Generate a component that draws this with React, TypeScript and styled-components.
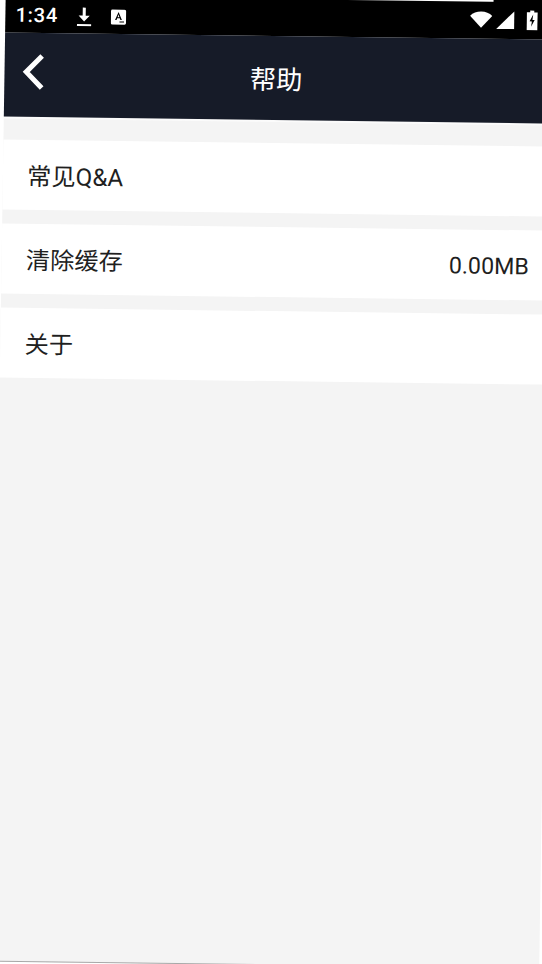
import React from "react";
import styled, { createGlobalStyle } from "styled-components";

const Global = createGlobalStyle`
  html, body { margin: 0; padding: 0; background: #fff; overflow: hidden; }
  body { font-family: Roboto, "Noto Sans CJK SC", sans-serif; }
`;

/* The reference is a slightly skewed photo of the phone screen. */
const Screen = styled.div`
  width: 543px;
  height: 965px;
  background: #f4f4f4;
  border-bottom: 1px solid #a8a8a8;
  display: flex;
  flex-direction: column;
  position: relative;
  transform-origin: 0 0;
  transform: matrix(1.01, 0.013, -0.0155, 1, 5.7, -4.4);
`;

const TopPatch = styled.div`
  position: absolute;
  top: -6px;
  right: -12px;
  width: 72px;
  height: 8px;
  background: #000;
`;

const StatusBar = styled.div`
  height: 37px;
  flex: none;
  background: #000;
  color: #fff;
  display: flex;
  align-items: center;
  padding: 4px 16px 0 10px;
  box-sizing: border-box;
`;

const Clock = styled.span`
  font-size: 20px;
  font-weight: 500;
  letter-spacing: 0.7px;
  width: 60px;
  margin-bottom: 3px;
`;

const LeftIcons = styled.div`
  display: flex;
  align-items: center;
  gap: 18px;
  margin-bottom: 2px;
`;

const RightIcons = styled.div`
  display: flex;
  align-items: center;
  margin-left: auto;
  margin-bottom: 6px;
`;

const StatusIcon = styled.svg`
  display: block;
  flex: none;
  margin-right: ${(p: { $gap?: number }) => p.$gap ?? 0}px;
`;

const TitleBar = styled.header`
  height: 84px;
  flex: none;
  background: #161b28;
  display: flex;
  align-items: center;
  padding: 0 16px;
  position: relative;
`;

const BackIcon = styled.svg`
  display: block;
  margin-bottom: 7px;
`;

const Title = styled.h1`
  position: absolute;
  left: 0;
  right: 5px;
  top: 26px;
  margin: 0;
  text-align: center;
  font-size: 26px;
  line-height: 36px;
  font-weight: 400;
  color: #fff;
`;

const List = styled.main`
  display: flex;
  flex-direction: column;
  gap: 14.5px;
  border-top: 2px solid #fbfbfb;
  padding-top: 21px;
`;

const Row = styled.div`
  height: 69.5px;
  background: #fff;
  display: flex;
  align-items: center;
  justify-content: space-between;
  padding: 0 21px 0 24px;
  font-size: 24px;
  color: #1f1f1f;
`;

const Value = styled.span`
  font-size: 23px;
  margin-top: 4px;
`;

export default function App() {
  return (
    <>
      <Global />
      <Screen>
        <TopPatch />
        <StatusBar>
          <Clock>1:34</Clock>
          <LeftIcons>
            <StatusIcon width="16" height="20" viewBox="0 0 16 20">
              <path d="M6.5 1h3v8h4L8 15 2.5 9h4z" fill="#fff" />
              <rect x="1" y="17.5" width="14" height="2" fill="#fff" />
            </StatusIcon>
            <StatusIcon width="16" height="16" viewBox="0 0 16 16">
              <rect x="0.5" y="0.5" width="15" height="15" rx="1.5" fill="#fff" />
              <path d="M8 3l3.4 8H9.9l-.6-1.7H6.7L6.1 11H4.6zM7.1 8.1h1.8L8 5.500z" fill="#000" />
              <rect x="9" y="12.4" width="4.5" height="1" fill="#000" />
            </StatusIcon>
          </LeftIcons>
          <RightIcons>
            <StatusIcon $gap={4} width="22" height="19" viewBox="0 0 23 18">
              <path d="M0 5.500C3 2.500 7 1 11.500 1S20 2.500 23 5.500L11.500 18z" fill="#fff" />
            </StatusIcon>
            <StatusIcon $gap={12} width="18" height="18" viewBox="0 0 18 18">
              <path d="M18 0v18H0z" fill="#fff" />
            </StatusIcon>
            <StatusIcon width="11" height="20" viewBox="0 0 11 20">
              <path d="M3.500 0h4v2H11v18H0V2h3.500z" fill="#fff" />
              <path d="M6.500 4L3 11h2.300l-.8 5.500L8 9.500H5.800z" fill="#000" />
            </StatusIcon>
          </RightIcons>
        </StatusBar>
        <TitleBar>
          <BackIcon width="26" height="38" viewBox="0 0 26 38">
            <path d="M21 3L5.500 19 21 35" fill="none" stroke="#fff" strokeWidth="5" />
          </BackIcon>
          <Title>帮助</Title>
        </TitleBar>
        <List>
          <Row>常见Q&amp;A</Row>
          <Row>
            清除缓存
            <Value>0.00MB</Value>
          </Row>
          <Row>关于</Row>
        </List>
      </Screen>
    </>
  );
}
